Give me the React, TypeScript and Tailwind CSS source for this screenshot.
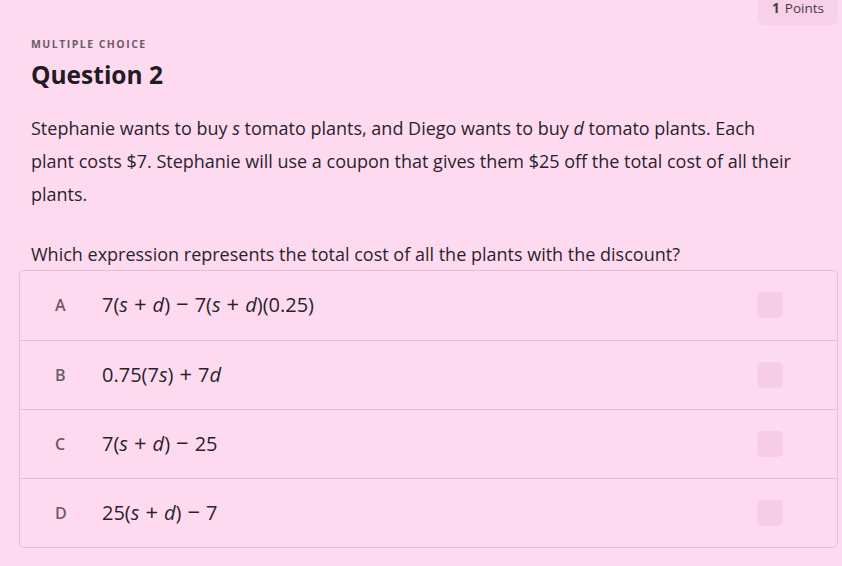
import React from "react";

const Op = ({ c }: { c: string }) => <span className="mx-[6px] text-[22px] leading-none">{c}</span>;

const options: { letter: string; expr: React.ReactNode }[] = [
    {
        letter: "A",
        expr: (
            <>
                7(<i>s</i><Op c="+" /><i>d</i>)<Op c="−" />7(<i>s</i><Op c="+" /><i>d</i>)(0.25)
            </>
        ),
    },
    {
        letter: "B",
        expr: (
            <>
                0.75(7<i>s</i>)<Op c="+" />7<i>d</i>
            </>
        ),
    },
    {
        letter: "C",
        expr: (
            <>
                7(<i>s</i><Op c="+" /><i>d</i>)<Op c="−" />25
            </>
        ),
    },
    {
        letter: "D",
        expr: (
            <>
                25(<i>s</i><Op c="+" /><i>d</i>)<Op c="−" />7
            </>
        ),
    },
];

const App = () => {
    return (
        <div className="w-[842px] h-[566px] bg-[#fedaf0] text-[#2b1f2b] font-['Open_Sans',sans-serif] overflow-hidden">
            <div className="flex justify-end pr-[4px]">
                <div className="bg-[#f8d1e8] rounded-b-md w-[80px] h-[25px] flex justify-center text-[13.5px] leading-[16px] text-[#4a3a48]">
                    <span className="font-bold mr-[5px]">1</span>Points
                </div>
            </div>

            <div className="px-[31px]">
                <div className="mt-[12px] text-[10.5px] font-bold tracking-[0.14em] text-[#6c5a68]">MULTIPLE CHOICE</div>
                <h2 className="mt-[7px] text-[24.5px] font-bold leading-[30px] text-[#241a24]">Question 2</h2>

                <p className="mt-[22px] text-[18px] leading-[33px] w-[770px]">
                    Stephanie wants to buy <i>s</i> tomato plants, and Diego wants to buy <i>d</i> tomato plants. Each
                    plant costs $7. Stephanie will use a coupon that gives them $25 off the total cost of all their
                    plants.
                </p>

                <p className="mt-[27px] text-[18px] leading-[33px]">
                    Which expression represents the total cost of all the plants with the discount?
                </p>
            </div>

            <div className="ml-[19px] mr-[4px] mt-[-1px] border border-[#e6bfd6] rounded-[5px]">
                {options.map((o, i) => (
                    <div
                        key={o.letter}
                        className={
                            "flex items-center h-[69px] " + (i > 0 ? "border-t border-[#e6bfd6]" : "")
                        }
                    >
                        <div className="w-[82px] pl-[35px] text-[16px] font-semibold text-[#6c5a68]">{o.letter}</div>
                        <div className="flex-1 text-[20px] font-medium text-[#2b1f2b]">{o.expr}</div>
                        <div className="w-[26px] h-[26px] rounded-[5px] bg-[#f6cde4] mr-[54px]" />
                    </div>
                ))}
            </div>
        </div>
    );
};

export default App;
